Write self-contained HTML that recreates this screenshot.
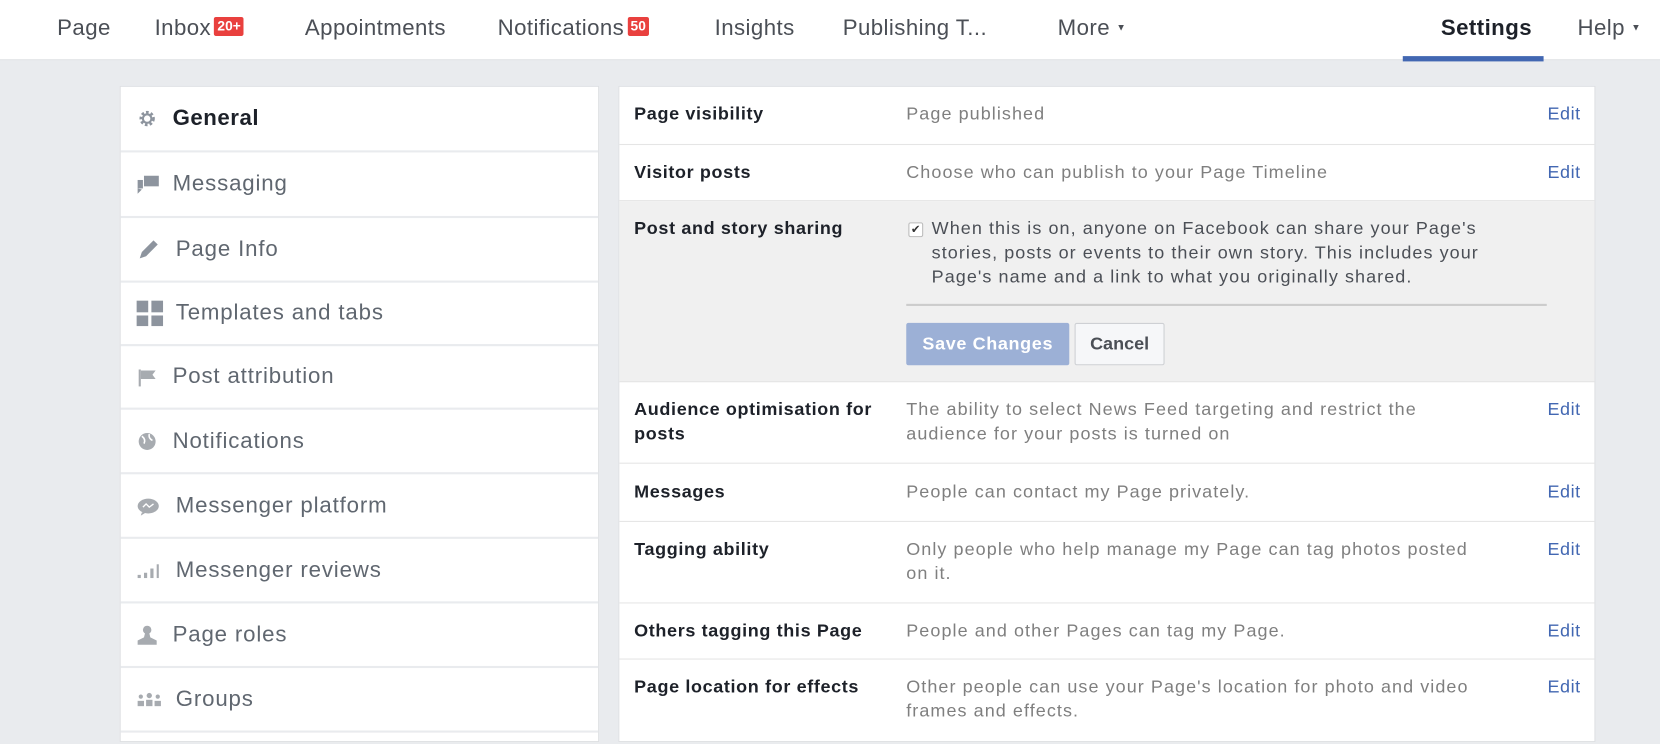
<!DOCTYPE html>
<html><head><meta charset="utf-8"><style>
*{margin:0;padding:0;box-sizing:border-box}
html,body{width:1660px;height:732px;overflow:hidden;background:#e9ebee;font-family:"Liberation Sans",Arial,sans-serif}
#w{position:absolute;left:0;top:0;width:1568px;height:692px;transform:scale(1.0587);transform-origin:0 0}
.nav{position:absolute;left:0;top:0;width:1568px;height:57px;background:#fff;border-bottom:1px solid #dddfe2}
.ni{position:absolute;top:15px;font-size:21px;letter-spacing:0.4px;color:#4b4f56;white-space:nowrap}
.badge{display:inline-block;background:#e9403e;color:#fff;font-size:13px;font-weight:bold;padding:1px 3px;border-radius:2px;vertical-align:4px;margin-left:3px;line-height:16px;letter-spacing:0}
.caret{font-size:9px;vertical-align:4px;margin-left:6px}
.ul{position:absolute;left:1325px;top:53px;width:133px;height:5px;background:#4267b2}
.left{position:absolute;left:113px;top:81px;width:453px;height:620px;background:#fff;border:1px solid #dddfe2}
.li{position:absolute;left:0;width:451px;border-bottom:2px solid #e9ebee;font-size:21px;letter-spacing:0.8px;color:#606770}
.li span.t{position:absolute;left:49px;top:50%;transform:translateY(-50%);white-space:nowrap}
.li svg{position:absolute;left:15px;top:50%;transform:translateY(-50%)}
.right{position:absolute;left:584px;top:81px;width:923px;height:620px;background:#fff;border:1px solid #dddfe2}
.r{position:absolute;left:0;width:921px;border-bottom:1px solid #e5e5e5;font-size:17px}
.lab{position:absolute;left:14px;font-weight:bold;color:#1d2129;line-height:23px;white-space:nowrap;letter-spacing:0.6px}
.val{position:absolute;left:271px;color:#7f7f7f;line-height:23px;white-space:nowrap;letter-spacing:1px}
.edit{position:absolute;right:13px;color:#4267b2;line-height:23px;letter-spacing:0.5px}
</style></head><body><div id="w">
<div class="nav">
<div class="ni" style="left:54px">Page</div>
<div class="ni" style="left:146px">Inbox<span class="badge">20+</span></div>
<div class="ni" style="left:288px">Appointments</div>
<div class="ni" style="left:470px">Notifications<span class="badge">50</span></div>
<div class="ni" style="left:675px">Insights</div>
<div class="ni" style="left:796px">Publishing T...</div>
<div class="ni" style="left:999px">More<span class="caret">▼</span></div>
<div class="ni" style="left:1361px;font-weight:bold;color:#1d2129">Settings</div>
<div class="ni" style="left:1490px">Help<span class="caret">▼</span></div>
<div class="ul"></div>
</div>

<div class="left">
<div class="li" style="top:0;height:62px"><svg width="20" height="20" viewBox="0 0 20 20"><circle cx="10" cy="10" r="6" fill="none" stroke="#8d949e" stroke-width="2.5" stroke-dasharray="2.5 2"/><circle cx="10" cy="10" r="4" fill="none" stroke="#8d949e" stroke-width="2"/></svg><span class="t" style="font-weight:bold;color:#1d2129;letter-spacing:0.5px">General</span></div>
<div class="li" style="top:62px;height:62px"><svg width="22" height="20" viewBox="0 0 22 20"><rect x="7" y="2" width="14" height="10" fill="#8d949e"/><rect x="1" y="6" width="5" height="8" fill="#8d949e"/><path d="M1 14 L1 19 L5 15Z" fill="#8d949e"/></svg><span class="t">Messaging</span></div>
<div class="li" style="top:124px;height:61px"><svg width="22" height="22" viewBox="0 0 22 22"><path d="M3 19 L5 13 L16 2 L20 6 L9 17Z" fill="#8d949e"/></svg><span class="t" style="left:52px">Page Info</span></div>
<div class="li" style="top:185px;height:60px"><svg width="26" height="26" viewBox="0 0 26 26"><rect x="0" y="1" width="11" height="11" fill="#8d949e"/><rect x="14" y="1" width="11" height="11" fill="#8d949e"/><rect x="0" y="15" width="11" height="10" fill="#8d949e"/><rect x="14" y="15" width="11" height="10" fill="#8d949e"/></svg><span class="t" style="left:52px">Templates and tabs</span></div>
<div class="li" style="top:245px;height:60px"><svg width="20" height="20" viewBox="0 0 20 20"><rect x="2" y="3" width="2" height="16" fill="#a7abb0"/><path d="M4 4 L18 4 L15 8 L18 12 L4 12Z" fill="#a7abb0"/></svg><span class="t">Post attribution</span></div>
<div class="li" style="top:305px;height:61px"><svg width="20" height="20" viewBox="0 0 20 20"><circle cx="10" cy="10" r="8" fill="#a7abb0"/><path d="M5 5 Q9 8 7 12 M12 3 Q11 7 15 9" stroke="#fff" stroke-width="1.5" fill="none"/></svg><span class="t">Notifications</span></div>
<div class="li" style="top:366px;height:61px"><svg width="22" height="20" viewBox="0 0 22 20"><ellipse cx="11" cy="10" rx="10" ry="7" fill="#a7abb0"/><path d="M5 16 L4 19 L9 16Z" fill="#a7abb0"/><path d="M6 11 L9 8 L12 11 L16 8" stroke="#fff" stroke-width="1.3" fill="none"/></svg><span class="t" style="left:52px">Messenger platform</span></div>
<div class="li" style="top:427px;height:61px"><svg width="24" height="16" viewBox="0 0 24 16"><rect x="1" y="12" width="3" height="3" fill="#a7abb0"/><rect x="7" y="10" width="3" height="5" fill="#a7abb0"/><rect x="13" y="6" width="3" height="9" fill="#a7abb0"/><rect x="19" y="2" width="2" height="13" fill="#a7abb0"/></svg><span class="t" style="left:52px">Messenger reviews</span></div>
<div class="li" style="top:488px;height:61px"><svg width="20" height="22" viewBox="0 0 20 22"><circle cx="10" cy="6" r="4" fill="#a7abb0"/><path d="M8 9 L12 9 L13 13 L19 16 L19 20 L1 20 L1 16 L7 13Z" fill="#a7abb0"/></svg><span class="t">Page roles</span></div>
<div class="li" style="top:549px;height:61px"><svg width="24" height="16" viewBox="0 0 24 16"><circle cx="4" cy="5" r="2" fill="#a7abb0"/><circle cx="12" cy="4" r="2.5" fill="#a7abb0"/><circle cx="20" cy="5" r="2" fill="#a7abb0"/><rect x="1" y="9" width="6" height="5" fill="#a7abb0"/><rect x="9" y="8" width="6" height="6" fill="#a7abb0"/><rect x="17" y="9" width="6" height="5" fill="#a7abb0"/></svg><span class="t" style="left:52px">Groups</span></div>
</div>

<div class="right">
<div class="r" style="top:0;height:55px"><div class="lab" style="top:14px">Page visibility</div><div class="val" style="top:14px">Page published</div><div class="edit" style="top:14px">Edit</div></div>
<div class="r" style="top:55px;height:53px"><div class="lab" style="top:14px">Visitor posts</div><div class="val" style="top:14px">Choose who can publish to your Page Timeline</div><div class="edit" style="top:14px">Edit</div></div>
<div class="r" style="top:108px;height:171px;background:#f0f0f0">
<div class="lab" style="top:14px">Post and story sharing</div>
<div style="position:absolute;left:273px;top:20px;width:14px;height:14px;border:1px solid #bbb;border-radius:2px;background:#fff;font-size:11px;line-height:12px;text-align:center;color:#333">✔</div>
<div class="val" style="left:295px;top:14px;color:#4b4f56">When this is on, anyone on Facebook can share your Page's<br>stories, posts or events to their own story. This includes your<br>Page's name and a link to what you originally shared.</div>
<div style="position:absolute;left:271px;top:97px;width:605px;height:2px;background:#ccc"></div>
<div style="position:absolute;left:271px;top:115px;width:154px;height:40px;background:#9cb0d6;border-radius:2px;color:#fff;font-weight:bold;line-height:40px;text-align:center;letter-spacing:0.6px">Save Changes</div>
<div style="position:absolute;left:430px;top:115px;width:85px;height:40px;background:#f6f7f9;border:1px solid #ced0d4;border-radius:2px;color:#4b4f56;font-weight:bold;line-height:38px;text-align:center">Cancel</div>
</div>
<div class="r" style="top:279px;height:77px"><div class="lab" style="top:14px">Audience optimisation for<br>posts</div><div class="val" style="top:14px">The ability to select News Feed targeting and restrict the<br>audience for your posts is turned on</div><div class="edit" style="top:14px">Edit</div></div>
<div class="r" style="top:356px;height:55px"><div class="lab" style="top:15px">Messages</div><div class="val" style="top:15px">People can contact my Page privately.</div><div class="edit" style="top:15px">Edit</div></div>
<div class="r" style="top:411px;height:77px"><div class="lab" style="top:14px">Tagging ability</div><div class="val" style="top:14px">Only people who help manage my Page can tag photos posted<br>on it.</div><div class="edit" style="top:14px">Edit</div></div>
<div class="r" style="top:488px;height:53px"><div class="lab" style="top:14px">Others tagging this Page</div><div class="val" style="top:14px">People and other Pages can tag my Page.</div><div class="edit" style="top:14px">Edit</div></div>
<div class="r" style="top:541px;height:80px;border:none"><div class="lab" style="top:14px">Page location for effects</div><div class="val" style="top:14px">Other people can use your Page's location for photo and video<br>frames and effects.</div><div class="edit" style="top:14px">Edit</div></div>
</div>
</div></body></html>
